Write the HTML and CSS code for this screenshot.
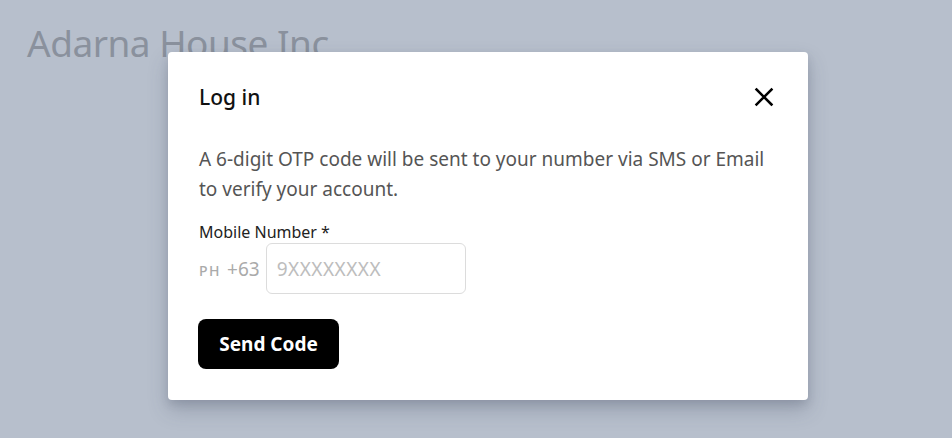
FILE: index.html
```html
<!DOCTYPE html>
<html lang="en">
<head>
<meta charset="utf-8">
<title>Log in</title>
<link rel="stylesheet" href="styles.css">
</head>
<body>
<main class="page">
  <h1 class="brand">Adarna House Inc</h1>
</main>
<div class="overlay">
  <section class="modal" role="dialog" aria-labelledby="login-title">
    <header class="modal-head">
      <h2 id="login-title" class="modal-title">Log in</h2>
      <button class="close" type="button" aria-label="Close">
        <svg width="22" height="22" viewBox="0 0 22 22" aria-hidden="true"><path d="M3.5 3.5 L18.5 18.5 M18.5 3.5 L3.5 18.5" stroke="#000" stroke-width="2.5" stroke-linecap="square" fill="none"/></svg>
      </button>
    </header>
    <p class="intro">A 6-digit OTP code will be sent to your number via SMS or Email to verify your account.</p>
    <label class="label" for="mobile">Mobile Number *</label>
    <div class="phone-row">
      <span class="prefix"><span class="cc">PH</span><span class="dial">+63</span></span>
      <input id="mobile" class="phone-input" type="text" placeholder="9XXXXXXXX">
    </div>
    <button class="send" type="button">Send Code</button>
  </section>
</div>
</body>
</html>
```
FILE: styles.css
```css
html, body {
  margin: 0;
  padding: 0;
}
body {
  background: #b7bfcc;
  font-family: "Noto Sans", "Open Sans", sans-serif;
  width: 952px;
  height: 438px;
  overflow: hidden;
}
.page {
  padding: 18px 0 0 27px;
}
.brand {
  margin: 0;
  font-family: "Noto Sans", sans-serif;
  font-weight: 400;
  font-size: 37px;
  line-height: 50px;
  color: #8a919d;
  letter-spacing: -0.5px;
}
.overlay {
  position: absolute;
  left: 168px;
  top: 52px;
}
.modal {
  box-sizing: border-box;
  width: 640px;
  height: 348px;
  background: #fff;
  border-radius: 4px;
  padding: 26px 31px 30px 31px;
  box-shadow: 0 10px 20px rgba(60, 66, 90, 0.25), 0 4px 8px rgba(60, 66, 90, 0.15);
}
.modal-head {
  display: flex;
  align-items: center;
  justify-content: space-between;
  height: 38px;
}
.modal-title {
  margin: 0;
  font-size: 21px;
  font-weight: 500;
  color: #111;
}
.close {
  border: 0;
  background: none;
  padding: 0;
  width: 22px;
  height: 22px;
  margin-right: 2px;
  cursor: pointer;
}
.close svg { display: block; }
.intro {
  margin: 28px 0 17px;
  font-size: 19px;
  line-height: 30px;
  color: #555;
  max-width: 580px;
}
.label {
  display: block;
  font-size: 16px;
  line-height: 22px;
  color: #222;
}
.phone-row {
  display: flex;
  align-items: center;
  gap: 6px;
  margin-top: 0;
}
.prefix {
  display: flex;
  align-items: baseline;
  gap: 6px;
  font-size: 19px;
  color: #aaa;
}
.cc {
  font-size: 14px;
  letter-spacing: 1.5px;
  font-weight: 500;
}
.phone-input {
  box-sizing: border-box;
  width: 200px;
  height: 51px;
  border: 1px solid #dcdcdc;
  border-radius: 6px;
  padding: 0 10px;
  font-family: inherit;
  font-size: 19px;
  letter-spacing: 0.5px;
  color: #333;
  outline: none;
}
.phone-input::placeholder {
  color: #bdbdbd;
}
.send {
  display: block;
  margin-top: 25px;
  margin-left: -1px;
  width: 141px;
  height: 50px;
  background: #000;
  color: #fff;
  border: 0;
  border-radius: 8px;
  font-family: inherit;
  font-size: 19px;
  font-weight: 700;
  cursor: pointer;
}
```
